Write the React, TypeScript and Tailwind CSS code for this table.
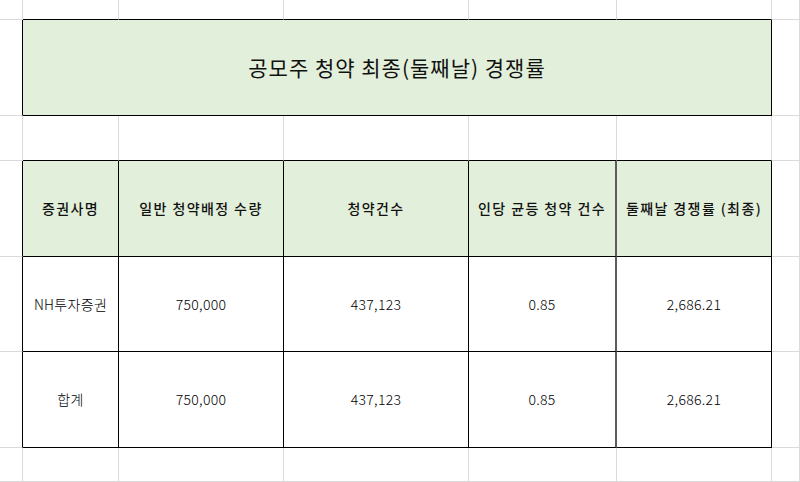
import React from "react";

const font = { fontFamily: '"Noto Sans CJK KR", "Noto Sans", sans-serif' };

function Blank({ r, b }: { r?: "g" | "k"; b?: "g" | "k" }) {
  const rc = r === "k" ? "border-r-black" : "border-r-[#dadada]";
  const bc = b === "k" ? "border-b-black" : "border-b-[#dadada]";
  return <div className={`border-r border-b ${rc} ${bc} bg-white`} />;
}

function Cell({
  children,
  head,
  thick,
}: {
  children: React.ReactNode;
  head?: boolean;
  thick?: boolean;
}) {
  return (
    <div
      className={`flex items-center justify-center border-b border-b-black ${
        thick ? "border-r-2 border-r-[#5c5c5c]" : "border-r border-r-black"
      } ${
        head
          ? "bg-[#e2efda] font-medium text-[#111] tracking-[1.4px]"
          : "bg-white font-light text-black tracking-[0.3px]"
      } text-[14px] whitespace-nowrap`}
    >
      {children}
    </div>
  );
}

export default function App() {
  const header = ["증권사명", "일반 청약배정 수량", "청약건수", "인당 균등 청약 건수", "둘째날 경쟁률 (최종)"];
  const rows = [
    ["NH투자증권", "750,000", "437,123", "0.85", "2,686.21"],
    ["합계", "750,000", "437,123", "0.85", "2,686.21"],
  ];
  return (
    <div
      className="w-[800px] h-[482px] overflow-hidden bg-white grid grid-cols-[23px_96px_165px_185px_148px_155px_1fr] grid-rows-[20px_96px_45px_96px_95px_96px_1fr]"
      style={font}
    >
      {/* row 0 */}
      <Blank r="g" b="g" />
      <Blank r="g" b="k" />
      <Blank r="g" b="k" />
      <Blank r="g" b="k" />
      <Blank r="g" b="k" />
      <Blank r="g" b="k" />
      <Blank r="g" b="g" />
      {/* row 1 title */}
      <Blank r="k" b="g" />
      <div className="col-span-5 flex items-center justify-center bg-[#e2efda] border-r border-b border-black text-[21px] tracking-[1px] text-[#111] whitespace-nowrap">
        공모주 청약 최종(둘째날) 경쟁률
      </div>
      <Blank r="g" b="g" />
      {/* row 2 */}
      <Blank r="g" b="g" />
      <Blank r="g" b="k" />
      <Blank r="g" b="k" />
      <Blank r="g" b="k" />
      <Blank r="g" b="k" />
      <Blank r="g" b="k" />
      <Blank r="g" b="g" />
      {/* header */}
      <Blank r="k" b="g" />
      {header.map((h, i) => (
        <Cell key={h} head thick={i === 3}>
          {h}
        </Cell>
      ))}
      <Blank r="g" b="g" />
      {rows.map((row, ri) => (
        <React.Fragment key={ri}>
          <Blank r="k" b="g" />
          {row.map((c, i) => (
            <Cell key={i} thick={i === 3}>
              {c}
            </Cell>
          ))}
          <Blank r="g" b="g" />
        </React.Fragment>
      ))}
      {/* last row */}
      <Blank r="g" b="g" />
      <Blank r="g" b="g" />
      <Blank r="g" b="g" />
      <Blank r="g" b="g" />
      <Blank r="g" b="g" />
      <Blank r="g" b="g" />
      <Blank r="g" b="g" />
    </div>
  );
}
